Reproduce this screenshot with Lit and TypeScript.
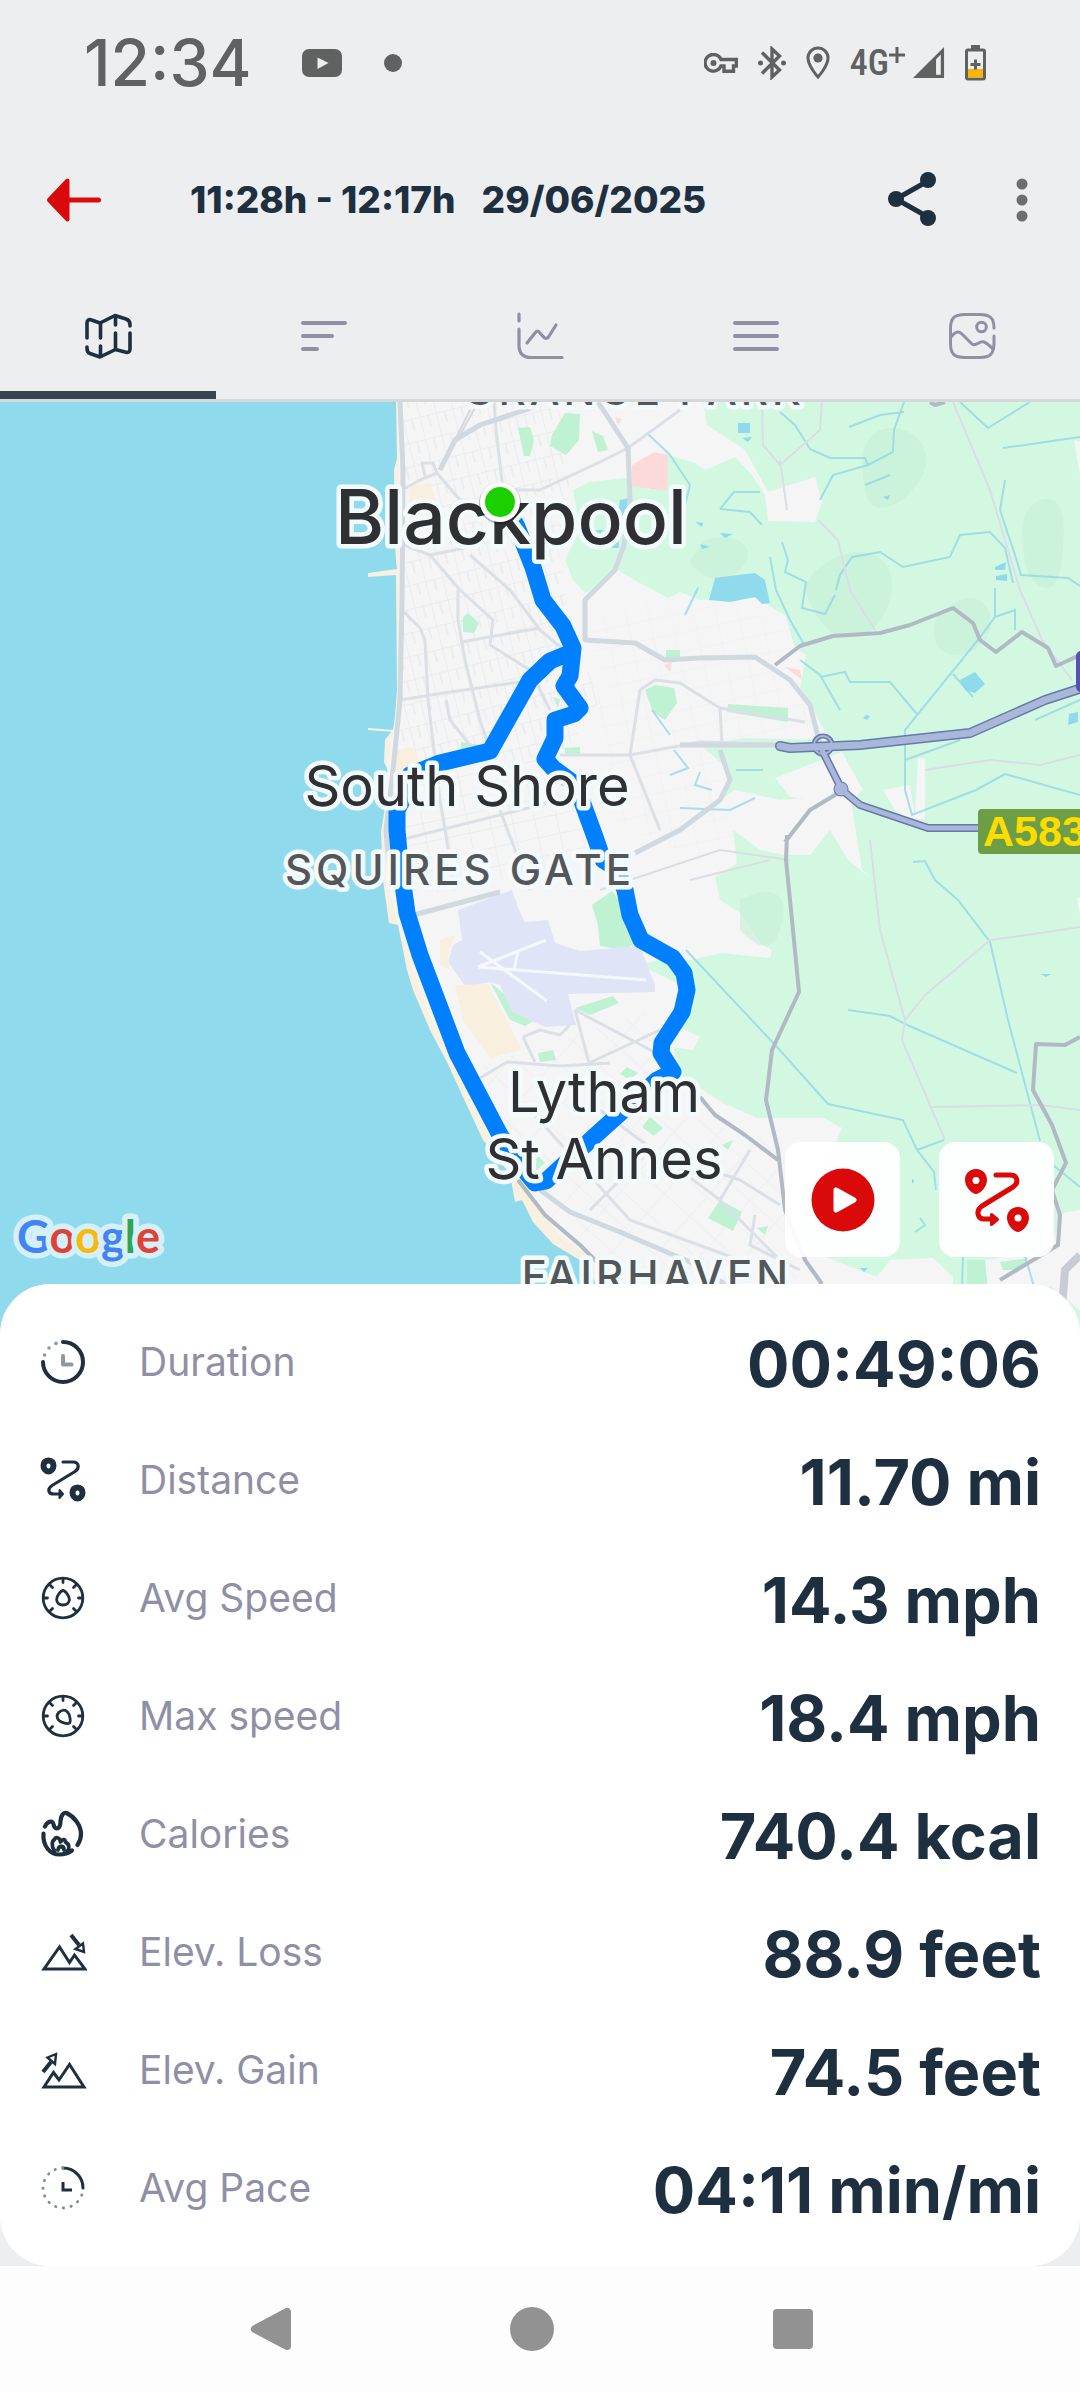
import { LitElement, html, css, svg, type TemplateResult, type SVGTemplateResult } from "lit";
import { customElement, property } from "lit/decorators.js";

const INK = "#1e2f40";
const MUTED = "#8f90a6";
const RED = "#db0a0a";

const icons: Record<string, SVGTemplateResult> = {
  duration: svg`
    <path d="M24 4A20 20 0 1 1 4 24" fill="none" stroke=${INK} stroke-width="4" stroke-linecap="round"/>
    <g fill="#8d98a3"><circle cx="5.600" cy="17" r="1.800"/><circle cx="10" cy="10" r="1.800"/><circle cx="17" cy="5.400" r="1.800"/></g>
    <path d="M24 18V26.500H32.500" fill="none" stroke="#8d98a3" stroke-width="4" stroke-linecap="round" stroke-linejoin="round"/>`,
  distance: svg`
    <g fill="none" stroke=${INK} stroke-linecap="round" stroke-linejoin="round">
      <path d="M9.500 4.500C13 4.500 14.500 7 14.500 9.500C14.500 13 12 15.500 9.500 15.500S4.500 13 4.500 9.500C4.500 7 6 4.500 9.500 4.500Z" stroke-width="6"/>
      <path d="M38.500 31.500C42 31.500 43.500 34 43.500 36.500C43.500 40 41 42.500 38.500 42.500S33.500 40 33.500 36.500C33.500 34 35 31.500 38.500 31.500Z" stroke-width="6"/>
      <path d="M24 6H34C40 6 41 12 36 15.500L13 29.500C8 33 9 38 15 38H21.500" stroke-width="3.200"/>
      <path d="M20.500 34L24 38L20.500 42Z" fill=${INK} stroke-width="2"/>
    </g>`,
  avgSpeed: svg`
    <g fill="none" stroke=${INK} stroke-width="2.800" stroke-linecap="round" stroke-linejoin="round">
      <circle cx="24" cy="24" r="19.800"/>
      <path d="M24 4.500V8.500M4.500 24H8.500M43.500 24H39.500M10.500 10.500L13.500 13.500M37.500 10.500L34.500 13.500M10.500 37.500L13.500 34.500M37.500 37.500L34.500 34.500"/>
      <path d="M24 16.500C22 16.500 17.600 22 17.600 25.500C17.600 29 20.500 31 24 31S30.400 29 30.400 25.500C30.400 22 26 16.500 24 16.500Z"/>
    </g>`,
  maxSpeed: svg`
    <g fill="none" stroke=${INK} stroke-width="2.800" stroke-linecap="round" stroke-linejoin="round">
      <circle cx="24" cy="24" r="19.800"/>
      <path d="M24 4.500V8.500M4.500 24H8.500M43.500 24H39.500M10.500 10.500L13.500 13.500M37.500 10.500L34.500 13.500M10.500 37.500L13.500 34.500M37.500 37.500L34.500 34.500"/>
      <path d="M30.500 31C32 29.500 31 22.500 28.500 20C26 17.500 22.500 17.800 20 20.300S17.800 26 20 28.500C22.500 31 29 32.300 30.500 31Z"/>
    </g>`,
  calories: svg`
    <g fill="none" stroke=${INK} stroke-width="4.200" stroke-linecap="round" stroke-linejoin="round">
      <path d="M6 16.500C7.500 13 10.500 11 12.800 11.700C15.500 13 14 18 17.500 18.500C21 18.500 21.500 14 21.500 11C22 6 24 2 27.500 3C35 6.500 42 15 42 24C42 28.500 40.500 32 38.500 35"/>
      <path d="M4.500 23.500C3.500 36 11 44.500 20.500 44.500C25.500 44.500 29.500 43 33 40.500"/>
      <path d="M15.500 41C12.500 37 12.500 31 15.500 29.500C16.500 27 20.500 26.500 21.500 32C23.500 28.500 26 29 26.500 32C30 34 31 38 28.500 41M19 40C19.500 37.500 21 36.500 22 36.500C23.500 36.500 25 37.500 25 40" stroke-width="3.800"/>
    </g>`,
  elevLoss: svg`
    <g fill="none" stroke=${INK} stroke-width="3" stroke-linejoin="miter">
      <path d="M5 41H46L35.500 27L30.500 34.500L20.500 19Z"/>
      <path d="M32 7L40 17" stroke-width="4"/>
      <path d="M36.500 21L44 15.500L45 24Z" stroke-width="2.400"/>
    </g>`,
  elevGain: svg`
    <g fill="none" stroke=${INK} stroke-width="3">
      <path d="M5 41H45L30.500 18.500L20 34L14.500 26.500Z"/>
      <path d="M4 26L12 16" stroke-width="4"/>
      <path d="M8.500 11.500L17 8L16 18Z" stroke-width="2.400"/>
    </g>`,
  avgPace: svg`
    <path d="M24 4A20 20 0 0 1 44 24" fill="none" stroke=${INK} stroke-width="3" stroke-linecap="round"/>
    <path d="M44 24A20 20 0 1 1 24 4" fill="none" stroke="#7f8b96" stroke-width="2.800" stroke-linecap="round" stroke-dasharray="0.400 7.450" stroke-dashoffset="-7"/>
    <path d="M24 18V26H33" fill="none" stroke=${INK} stroke-width="3"/>`,
};

interface Stat {
  icon: string;
  label: string;
  value: string;
}

const stats: Stat[] = [
  { icon: "duration", label: "Duration", value: "00:49:06" },
  { icon: "distance", label: "Distance", value: "11.70 mi" },
  { icon: "avgSpeed", label: "Avg Speed", value: "14.3 mph" },
  { icon: "maxSpeed", label: "Max speed", value: "18.4 mph" },
  { icon: "calories", label: "Calories", value: "740.4 kcal" },
  { icon: "elevLoss", label: "Elev. Loss", value: "88.9 feet" },
  { icon: "elevGain", label: "Elev. Gain", value: "74.5 feet" },
  { icon: "avgPace", label: "Avg Pace", value: "04:11 min/mi" },
];

/* ---------- Android status bar ---------- */
@customElement("status-bar")
export class StatusBar extends LitElement {
  static styles = css`
    :host {
      display: flex;
      align-items: center;
      height: 126px;
      padding: 0 94px 0 84px;
      color: #606161;
      font-family: Inter, sans-serif;
    }
    .time { font-size: 64px; line-height: 72px; font-weight: 500; }
    .notes { display: flex; align-items: center; gap: 42px; margin-left: 50px; }
    .system { display: flex; align-items: center; margin-left: auto; gap: 20px; }
    .network { display: flex; align-items: center; gap: 8px; }
    .carrier {
      display: flex;
      align-items: flex-start;
      font-family: "Roboto Condensed", "Liberation Sans Narrow", Roboto, sans-serif;
      font-size: 36px;
      line-height: 40px;
      font-weight: 500;
    }
    svg { display: block; }
  `;

  render() {
    return html`
      <span class="time">12:34</span>
      <div class="notes">
        <svg width="40" height="28" viewBox="0 0 40 28" aria-label="Video notification" role="img">
          <rect width="40" height="28" rx="7" fill="#606161"/><path d="M15.500 8.500L26.500 14L15.500 20Z" fill="#eceef0"/>
        </svg>
        <svg width="18" height="18" viewBox="0 0 18 18" aria-hidden="true"><circle cx="9" cy="9" r="9" fill="#606161"/></svg>
      </div>
      <div class="system">
        <svg width="34" height="20" viewBox="0 0 34 20" aria-label="VPN" role="img">
          <path d="M9.500 1.500A8.300 8.300 0 1 0 17 13H20V18.300H29.500V13H32.300V6.500H17A8.300 8.300 0 0 0 9.500 1.500Z" fill="none" stroke="#606161" stroke-width="3.400"/>
          <circle cx="9.500" cy="10" r="3" fill="#606161"/>
        </svg>
        <svg width="28" height="34" viewBox="0 0 28 34" aria-label="Bluetooth" role="img">
          <path d="M4 6.500L21.500 24L14 31V3L21.500 10L4 27.500" fill="none" stroke="#606161" stroke-width="3.400"/>
          <circle cx="2.500" cy="17" r="2.500" fill="#606161"/><circle cx="25.500" cy="17" r="2.500" fill="#606161"/>
        </svg>
        <svg width="24" height="34" viewBox="0 0 24 34" aria-label="Location" role="img">
          <path d="M12 2A10 10 0 0 0 2 12C2 20 12 31 12 31S22 20 22 12A10 10 0 0 0 12 2Z" fill="none" stroke="#606161" stroke-width="3"/>
          <circle cx="12" cy="12" r="4.600" fill="#606161"/>
        </svg>
        <div class="network">
          <span class="carrier">4G<svg width="16" height="22" viewBox="0 0 16 22" aria-label="plus" role="img"><path d="M8 4V20M0 12H16" stroke="#606161" stroke-width="3" /></svg></span>
          <svg width="32" height="32" viewBox="0 0 34 34" aria-label="Signal" role="img">
            <path d="M0 33L33 0V33Z" fill="#606161"/><path d="M24.500 13L29.500 8V29.500H24.500Z" fill="#eceef0"/>
          </svg>
        </div>
        <svg width="21" height="36" viewBox="0 0 21 36" aria-label="Battery saver" role="img">
          <rect x="6" width="9" height="5" fill="#606161"/>
          <rect x="1.500" y="5" width="18" height="29" rx="1.500" fill="#eceef0" stroke="#606161" stroke-width="3"/>
          <rect x="3" y="24" width="15" height="8.500" fill="#fbb400"/>
          <path d="M10.500 14.500V24.500M5.500 19.500H15.500" stroke="#606161" stroke-width="3"/>
        </svg>
      </div>
    `;
  }
}

/* ---------- Title bar with back, share and overflow ---------- */
@customElement("title-bar")
export class TitleBar extends LitElement {
  static styles = css`
    :host {
      display: flex;
      align-items: center;
      height: 148px;
      padding: 0 46px 0 38px;
      font-family: Inter, sans-serif;
      color: #1e2f40;
    }
    button { display: grid; place-items: center; border: 0; padding: 0; background: none; cursor: pointer; }
    .back { width: 72px; height: 72px; }
    .title { flex: 1; display: flex; gap: 26px; margin: 0 0 0 80px; font-size: 37px; line-height: 48px; font-weight: 800; white-space: nowrap; }
    .share { width: 72px; height: 72px; margin-right: 62px; }
    .more { width: 24px; height: 72px; }
    .actions { display: flex; align-items: center; }
    svg { display: block; }
  `;

  render() {
    return html`
      <button class="back" aria-label="Back">
        <svg width="56" height="46" viewBox="0 0 56 46">
          <path d="M3 23L21.500 3.500V42.500Z" fill=${RED} stroke=${RED} stroke-width="4" stroke-linejoin="round"/>
          <path d="M20 23H52.500" stroke=${RED} stroke-width="5" stroke-linecap="round"/>
        </svg>
      </button>
      <h1 class="title"><span>11:28h - 12:17h</span><span>29/06/2025</span></h1>
      <div class="actions">
        <button class="share" aria-label="Share">
          <svg width="48" height="56" viewBox="0 0 48 56">
            <path d="M40 9L8 27L40 45" fill="none" stroke=${INK} stroke-width="5"/>
            <g fill=${INK}><circle cx="40" cy="8" r="8"/><circle cx="8" cy="27" r="8"/><circle cx="40" cy="46" r="8"/></g>
          </svg>
        </button>
        <button class="more" aria-label="More options">
          <svg width="12" height="44" viewBox="0 0 12 44"><g fill="#6c6d6d"><circle cx="6" cy="6" r="5.500"/><circle cx="6" cy="22" r="5.500"/><circle cx="6" cy="38" r="5.500"/></g></svg>
        </button>
      </div>
    `;
  }
}

/* ---------- Section tabs ---------- */
@customElement("section-tabs")
export class SectionTabs extends LitElement {
  @property({ type: Number }) active = 0;

  static styles = css`
    :host { display: block; border-bottom: 3px solid #d5d7d8; }
    .tabs { display: grid; grid-template-columns: repeat(5, 1fr); height: 125px; }
    .tab { display: grid; place-items: center; border: 0; border-top: 6px solid transparent; border-bottom: 8px solid transparent; padding: 0; background: none; cursor: pointer; }
    .tab.current { border-bottom-color: #364550; }
    svg { display: block; }
  `;

  private tabs: { name: string; art: SVGTemplateResult }[] = [
    {
      name: "Map",
      art: svg`<g fill="none" stroke=${INK} stroke-width="3.600" stroke-linecap="round" stroke-linejoin="round">
        <path d="M3 26V11C3 8 5 7 7.500 8L16 11L31 3.500L42 7C45 8 46 10 46 12.500V14"/>
        <path d="M46 21V37C46 40 44 41 41 40L31.500 37.500L16 45L6 41.500C3.500 40.500 3 39 3 36.500V35"/>
        <path d="M16.500 12V26M16.500 34V44M31.500 4V13M31.500 21V37"/></g>`,
    },
    {
      name: "Laps",
      art: svg`<path d="M3 11H45M3 24H32M3 37H17" fill="none" stroke=${MUTED} stroke-width="4" stroke-linecap="round"/>`,
    },
    {
      name: "Charts",
      art: svg`<g fill="none" stroke=${MUTED} stroke-width="3.200" stroke-linecap="round" stroke-linejoin="round">
        <path d="M3 2V9M3 17V33C3 41 7 45.500 15 45.500H46"/>
        <path d="M11 31L19 21C21 18.500 22.500 18.500 24 21L27.500 25C29.500 27 30.500 27 32.500 25L40 13"/></g>`,
    },
    {
      name: "Details",
      art: svg`<path d="M3 11H45M3 24H45M3 37H45" fill="none" stroke=${MUTED} stroke-width="4" stroke-linecap="round"/>`,
    },
    {
      name: "Photos",
      art: svg`<g fill="none" stroke=${MUTED} stroke-width="3" stroke-linecap="round" stroke-linejoin="round">
        <path d="M46 16C46 6 42 2.500 32 2.500H17C6 2.500 2.500 6 2.500 17V31C2.500 42 6 45.500 17 45.500H32C42 45.500 46 42 46 31V24"/>
        <path d="M3 25C7 19.500 11 18.500 14 22L24 32C29 35 31 28 36 30C39 31 42 34 45 37"/>
        <circle cx="33.500" cy="15" r="4.800"/></g>`,
    },
  ];

  render() {
    return html`
      <div class="tabs" role="tablist">
        ${this.tabs.map(
          (t, i) => html`<button role="tab" class=${i === this.active ? "tab current" : "tab"} aria-selected=${i === this.active} aria-label=${t.name}>
            <svg width="48" height="48" viewBox="0 0 48 48">${t.art}</svg>
          </button>`,
        )}
      </div>
    `;
  }
}

/* ---------- Map with the recorded route ---------- */
@customElement("route-map")
export class RouteMap extends LitElement {
  static styles = css`
    :host { display: block; position: relative; overflow: hidden; background: #90daee; font-family: Inter, sans-serif; }
    .canvas { position: absolute; inset: 0; width: 100%; height: 100%; display: block; }
    .place { fill: #2e3033; stroke: #f3fafc; stroke-width: 9px; stroke-linejoin: round; paint-order: stroke; text-anchor: middle; }
    .city { font-size: 75px; font-weight: 500; }
    .town { font-size: 56px; font-weight: 400; }
    .suburb { font-size: 42px; font-weight: 500; letter-spacing: 4px; fill: #54575a; }
    .road { font-family: "Liberation Sans", Arial, sans-serif; font-size: 43px; font-weight: 700; fill: #ffdc00; }
    .brand { font-family: Lato, sans-serif; font-size: 45px; font-weight: 700; stroke: #d5f0f8; stroke-width: 11px; stroke-linejoin: round; paint-order: stroke; }
    .controls { position: absolute; right: 26px; bottom: 77px; display: flex; gap: 39px; }
    .control { width: 115px; height: 115px; display: grid; place-items: center; border: 0; border-radius: 16px; padding: 0; background: rgba(255, 255, 255, 0.93); cursor: pointer; }
    .control svg { display: block; }
  `;

  private land() {
    return svg`
      <path fill="#f8f0e0" d="M396 402L397 458L394 470L395 540L396 562L397 569L368 573V577L396 575L397 690L394 728L385 740L384 762L390 775L381 832L383 880L389 923L398 925L407 970L413 990L430 1030L447 1062L463 1097L483 1140L510 1174L515 1202L522 1200L533 1222L553 1244L583 1262L600 1290L650 1340H1080V402Z"/>
      <path fill="#f5f5f6" d="M399 402V600L398 700L388 760L384 830L387 880L396 918L412 965L425 1005L445 1048L470 1100L492 1142L514 1172L535 1205L560 1235L590 1258L612 1290L660 1340H1080V402Z"/>
      <path fill="none" stroke="#f8f0e0" stroke-width="2" d="M368 729L394 731"/>
      <path fill="url(#grid-a)" d="M402 402H560L570 480L560 560L575 640L600 700L560 760H400Z"/>
      <path fill="url(#grid-b)" d="M398 760H560L590 860L400 900L388 840Z"/>
      <path fill="url(#grid-c)" d="M455 1075L650 1010L720 1110L790 1160L800 1334H620L520 1180Z" opacity=".6"/>
      <path fill="url(#grid-b)" d="M590 620L680 592L780 620L810 720L800 800L700 860L610 820Z" opacity=".4"/>`;
  }

  private vegetation() {
    return svg`
      <path fill="#d3f8e2" d="M703 402H1080V1334H1010L953 1334L953 1277L933 1258L890 1260L877 1277L823 1256L790 1240L837 1140L842 1128L823 1118L757 1118L723 1103L683 1077L673 1047L693 1050L700 1037L680 1027L690 990L640 965L670 957L690 960L722 953L770 958L772 950L760 943L740 913L720 900L715 877L737 863L733 830L720 800L730 770L700 745L745 738L830 740L812 708L800 690L806 655L795 648L785 615L755 598L700 600L680 592L668 598L640 583L617 570L600 585L585 593L573 580L565 560L580 530L573 490L590 482L625 478L650 490L668 455L695 463L705 470L735 457L752 475L765 495L768 521L815 522L822 502L815 477L768 492L745 450L707 425Z"/>
      <g fill="#c6efd7" opacity=".6">
        <path d="M830 560C870 540 900 560 890 600S840 650 820 620S800 580 830 560ZM960 600C985 590 1000 620 985 640S940 660 935 640S940 610 960 600ZM880 430C910 420 940 450 920 480S870 520 865 490S860 440 880 430ZM1040 500C1070 490 1065 540 1060 570S1030 590 1025 560S1020 510 1040 500ZM740 900C780 880 790 900 780 930S750 940 740 930ZM705 540C740 530 760 550 740 570S690 570 690 560Z"/>
      </g>
      <g fill="#f5f5f6">
        <path d="M775 778L842 752L863 790L850 802L790 797ZM733 830L720 800L735 790L780 800L850 795L862 870L873 880L848 860L830 830L810 855L785 855L760 850Z"/>
        <path d="M918 758H925V820L915 818ZM883 790L910 785L916 825L895 810ZM1074 440L1080 442V475ZM1077 898L1080 897V915Z"/>
        <path d="M1063 1213L1080 1210V1310L1050 1286L1010 1334H985V1260L1050 1250Z"/>
      </g>
      <g fill="#bff1d3">
        <path d="M518 428L530 427L534 440L530 456H524ZM565 413L580 414L579 440L566 455L550 446L552 435ZM592 431L603 436L608 450L598 452Z"/>
        <path d="M463 617L468 613L479 623L474 633L463 632ZM645 690L655 685L674 688L677 703L665 720L653 712ZM461 742L480 745L477 752H460ZM553 697L560 699L558 708ZM565 748L580 747V755H565ZM666 650L680 650V660H666ZM728 704L788 708V722L727 712Z"/>
        <path d="M592 905L612 891L622 905L625 928L634 945L620 950L600 946L598 925ZM575 1008L613 996L619 1003L590 1015ZM538 1053L553 1050L556 1060L540 1062ZM620 1074L627 1067L638 1073L630 1080ZM642 1127L650 1117L663 1128L654 1136ZM490 982L505 995L520 1015L535 1020L525 1026L510 1020Z"/>
        <path d="M720 1200L742 1212L733 1231L708 1218ZM1000 1262L1028 1258L1020 1270H1003ZM967 1260H985L988 1290H967ZM722 1145L733 1140L728 1150ZM757 1228L768 1226L765 1235ZM537 1155L545 1163L535 1172Z"/>
      </g>
      <path fill="#dfe5f6" d="M458 910L512 890L519 910L525 922L548 920L555 943L580 951L640 946L655 985L655 992L568 994L576 1025L545 1027L512 1012L500 985L490 982L466 987L448 962L453 945L462 940Z"/>
      <g stroke="#f6f8ff" stroke-width="3" fill="none"><path d="M478 967L646 980M478 967L546 940M480 952L547 1001M518 951L514 970"/></g>
      <path fill="#f8efdf" d="M455 985L488 984L522 1050L490 1058L463 1020ZM440 940L455 935L448 955L450 970L440 965ZM410 485L430 483L436 500L420 530L408 520ZM396 750L412 747L422 765L395 775Z"/>
      <g fill="#fcdada"><path d="M632 465L654 452L668 455L667 491L631 486ZM615 417L622 419L618 425ZM785 667L800 670L802 680ZM664 665L672 662L670 672Z"/></g>`;
  }

  private water() {
    return svg`
      <g fill="#90daee">
        <path d="M715 578L730 576L755 573L765 580L770 603L762 604L755 597L730 602L709 600ZM960 680L975 672L985 684L975 693L965 690ZM738 423H750V433H738ZM742 438L752 437L748 442ZM620 500L630 498L626 515L618 528L619 548H612ZM995 567L1006 562L1005 570H995ZM996 576L1007 574V581L996 580ZM1069 714L1078 712V722L1068 725ZM695 522L703 523L702 527ZM720 533L733 534L725 538ZM700 544L710 547L702 549ZM737 547L744 549ZM883 497L890 495L888 500ZM866 715L870 716L867 720L863 718ZM595 530L604 530L600 534ZM1041 974H1051L1046 977ZM860 1268L868 1268L864 1272ZM912 1179A2 2 0 1 1 912 1183Z"/>
      </g>
      <g fill="none" stroke="#8fd5e6" stroke-width="2" opacity=".75">
        <path d="M780 412L795 425L810 449L830 458L865 458L868 465L893 452L894 430L904 402M868 465L833 475L820 500M849 427L880 415L904 412M865 485L890 475M960 402L988 428L1030 402M1003 448L1080 437M1005 480L1000 510L1015 555L1021 575L1068 578L1080 586M782 542L788 560L785 572L806 582L802 608L825 614L835 595M836 590L840 575L852 557L880 552L903 567L950 557L960 535L990 532L1005 548L1013 583M770 557L776 590L790 620L805 646"/>
        <path d="M720 509L734 492H760M720 509L750 512L762 525M995 588V617L978 640L905 730L905 790L912 815L976 790L1005 774L1080 795M995 617L1015 610V630M820 677L845 672L850 682H890L917 714M953 674L973 697M905 760L960 740M800 660L820 675L840 710M1035 720L1080 700M648 434L670 455L690 485L685 505M685 615L698 588M652 710L670 735M680 808L730 810L755 798M674 750L688 768L670 775M736 770H763M700 772L695 785L712 790"/>
        <path d="M913 862L925 861L935 880L958 900L990 942L1008 1020L1040 1141M848 1010L890 1016L905 1024L1017 1073M686 950L778 1048L828 1104L903 1120L917 1150L934 1172L936 1190M917 1150L944 1140M963 1256L962 1290M1025 1256L1035 1290M1053 1165L1080 1187M920 1218L925 1225L915 1232"/>
      </g>`;
  }

  private roads() {
    return svg`
      <g fill="none" stroke="#dcdde4" stroke-width="2">
        <path d="M953 402L990 490L1020 590L1042 640L1072 680M780 460L787 510M762 402L763 445L780 465L820 430L822 402M818 520L838 540L850 590L875 630M925 770L990 760L1040 765L1080 755M870 840L880 930L905 1020L902 1040L945 1140M905 1020L925 995L955 970L990 940L1020 936L1080 927M932 1107L1040 1105L1080 1110M600 890L720 850L790 860M690 880L770 860"/>
      </g>
      <g fill="none" stroke="#dbe0e6" stroke-width="3" stroke-linejoin="round">
        <path d="M494 402L496 430L503 490M503 490H540L600 462L628 448L680 410M402 490L420 480L437 473L433 463H422L425 476M437 473L460 500L470 500M402 610L420 628L425 640L428 700L440 800L455 890M404 545L430 555L460 590L493 620L490 645L530 670L550 710M430 555L480 545M470 555L510 590L540 630L570 655M461 642L540 628M446 700L450 720L470 745L490 755"/>
        <path d="M400 700L450 692L520 682M458 590V620L465 660L480 720L490 750M560 755L630 755L700 742L805 745M630 755L640 690L655 680L680 683L720 708L805 722M720 708L722 745M630 755L660 830M500 810L530 890M400 840L560 800"/>
        <path d="M480 1078L507 1062L560 1066L610 1063M575 1010L589 1063M575 1010L660 1055M589 1063L660 1030M523 1037L540 1030L560 1035L570 1025M523 1037L535 1062M600 1110L720 1200L780 1260M590 1210L650 1150M530 1110L630 1220L740 1260M720 1200L750 1150M755 1215L750 1245L800 1270M710 1170L740 1180L780 1205"/>
      </g>
      <g fill="none" stroke="#d0d8e0" stroke-width="5" stroke-linejoin="round">
        <path d="M400 402L403 470L402 600L400 700L392 780L386 830L390 880M440 470L455 440L480 425L540 405M598 402L628 448L630 500L624 545L615 570L585 600V640L635 643L665 660L700 658L755 657L790 680L810 705L820 745M410 916L500 892M635 853L680 830L720 800L730 780L720 750M680 745L785 745"/>
        <path d="M540 1190L570 1212L620 1232L690 1262L750 1300"/>
      </g>
      <path fill="none" stroke="#d5d8dd" stroke-width="2" d="M440 470L470 410M446 460L476 406"/>
      <path fill="none" stroke="#b1b9c4" stroke-width="4" stroke-linejoin="round" d="M775 665L800 646L833 636L880 633L910 625L953 608L973 623L980 640L996 652L1022 632L1048 648L1056 666L1080 655M930 402L935 405L945 402M785 842L810 810L840 792M787 835L786 860L792 920L799 992L772 1050L766 1100L778 1150L785 1210L805 1260L822 1284M700 1097L715 1115L745 1135L778 1160M518 1180L545 1215L580 1245L605 1270M1080 1037L1065 1045L1036 1044L1033 1090L1052 1125L1066 1163L1052 1190L1060 1215L1058 1245L1000 1280"/>
      <path fill="none" stroke="#c7ccd7" stroke-width="8" d="M1080 1255L1065 1270L1060 1334"/>
      <g fill="none" stroke-linejoin="round" stroke-linecap="round">
        <path stroke="#6679a8" stroke-width="10" d="M780 746L790 748L860 745L970 733L1045 700L1085 687"/>
        <path stroke="#6679a8" stroke-width="8" d="M822 750L842 790L860 805L928 828H980"/>
        <circle cx="823" cy="745" r="9" stroke="#6679a8" stroke-width="5"/><circle cx="841" cy="789" r="5" stroke="#6679a8" stroke-width="5"/>
        <path stroke="#a9b8da" stroke-width="7" d="M780 746L790 748L860 745L970 733L1045 700L1085 687"/>
        <path stroke="#a9b8da" stroke-width="5" d="M822 750L842 790L860 805L928 828H980"/>
        <circle cx="823" cy="745" r="9" stroke="#a9b8da" stroke-width="2"/><circle cx="841" cy="789" r="5" stroke="#a9b8da" stroke-width="3" fill="#a9b8da"/>
      </g>`;
  }

  render() {
    return html`
      <svg class="canvas" viewBox="0 402 1080 932" preserveAspectRatio="xMidYMid slice" role="img" aria-label="Route from Blackpool to Lytham St Annes and back">
        <defs>
          <pattern id="grid-a" width="17" height="23" patternUnits="userSpaceOnUse" patternTransform="rotate(-14)"><path d="M0 0H17M0 0V23M9 0V12" stroke="#e9eaed" stroke-width="1.500" fill="none"/></pattern>
          <pattern id="grid-b" width="22" height="19" patternUnits="userSpaceOnUse" patternTransform="rotate(-12)"><path d="M0 0H22M0 0V19" stroke="#e8eaed" stroke-width="1.500" fill="none"/></pattern>
          <pattern id="grid-c" width="34" height="26" patternUnits="userSpaceOnUse" patternTransform="rotate(42)"><path d="M0 0H34M0 0V26" stroke="#e6e9ed" stroke-width="1.500" fill="none"/></pattern>
        </defs>
        ${this.land()}${this.vegetation()}${this.water()}${this.roads()}
        <path fill="none" stroke="#0080ff" stroke-width="17" stroke-linejoin="round" stroke-linecap="round"
          d="M503 500L517 527L533 567L543 600L563 626L573 648L570 676L564 686L580 708L574 714L555 720V738L545 759L553 768L576 785L595 837L603 860L616 868L625 890L630 915L641 940L673 958L684 973L687 990L682 1012L662 1043L661 1053L673 1072L657 1080L597 1134L546 1181L535 1183L520 1165L500 1135L457 1053L420 955L407 913L400 863L397 830V810L405 795L410 775L440 763L490 751L530 680L550 661L572 652"/>
        <g>
          <text class="place suburb" x="634" y="405">GRANGE PARK</text>
          <text class="place city" x="511" y="544">Blackpool</text>
          <text class="place town" x="467" y="806">South Shore</text>
          <text class="place suburb" x="460" y="885">SQUIRES GATE</text>
          <text class="place town" x="604" y="1112">Lytham</text>
          <text class="place town" x="604" y="1179">St Annes</text>
          <text class="place suburb" x="657" y="1291">FAIRHAVEN</text>
        </g>
        <rect x="978" y="809" width="120" height="45" rx="4" fill="#6b9e45"/>
        <text class="road" x="983" y="846">A583</text>
        <rect x="1076" y="651" width="30" height="41" rx="5" fill="#5a4fb8"/>
        <circle cx="500" cy="503" r="21" fill="#000" opacity=".25"/>
        <circle cx="500" cy="502" r="20" fill="#fff"/>
        <circle cx="500" cy="502" r="15" fill="#1cd000"/>
        <text class="brand" x="17" y="1253"><tspan fill="#4284f3">G</tspan><tspan fill="#e04238">o</tspan><tspan fill="#f6b90c">o</tspan><tspan fill="#4284f3">g</tspan><tspan fill="#33a451">l</tspan><tspan fill="#e04238">e</tspan></text>
      </svg>
      <div class="controls">
        <button class="control" aria-label="Play route">
          <svg width="64" height="64" viewBox="0 0 64 64"><circle cx="32" cy="32" r="31.500" fill=${RED}/><path d="M25 22L43 32L25 42Z" fill="#fff" stroke="#fff" stroke-width="5" stroke-linejoin="round"/></svg>
        </button>
        <button class="control" aria-label="Show route">
          <svg width="64" height="64" viewBox="0 0 64 64">
            <path fill=${RED} fill-rule="evenodd" d="M11 1C18 1 22 6 22 12C22 19 15 26 11 26S0 19 0 12C0 6 4 1 11 1ZM11 9A3.500 3.500 0 1 0 11 16A3.500 3.500 0 1 0 11 9ZM53 39C60 39 64 44 64 50C64 57 57 64 53 64S42 57 42 50C42 44 46 39 53 39ZM53 46.500A3.500 3.500 0 1 0 53 53.500A3.500 3.500 0 1 0 53 46.500Z"/>
            <path fill="none" stroke=${RED} stroke-width="5" stroke-linecap="round" stroke-linejoin="round" d="M31 7H45C53 7 54 15 48 19L17 38C10 43 13 51 19 51H28"/>
            <path d="M26.500 46.500L32.500 51.500L26.500 56.500Z" fill=${RED} stroke=${RED} stroke-width="3" stroke-linejoin="round"/>
          </svg>
        </button>
      </div>
    `;
  }
}

/* ---------- Workout figures ---------- */
@customElement("stats-panel")
export class StatsPanel extends LitElement {
  @property({ attribute: false }) rows: Stat[] = [];

  static styles = css`
    :host { display: block; font-family: Inter, sans-serif; background: #fff; border-radius: 50px; }
    .list { margin: 0; padding: 19px 39px; }
    .row { display: grid; grid-template-columns: 48px 1fr auto; align-items: center; height: 118px; }
    .row svg { display: block; }
    .label { margin-left: 52px; font-size: 39px; line-height: 48px; color: #8f90a6; }
    .value { margin: 0; padding-top: 4px; font-size: 63px; line-height: 80px; font-weight: 700; color: #1e2f40; white-space: nowrap; }
  `;

  render(): TemplateResult {
    return html`
      <dl class="list">
        ${this.rows.map(
          (r) => html`<div class="row">
            <svg width="48" height="48" viewBox="0 0 48 48" aria-hidden="true">${icons[r.icon]}</svg>
            <dt class="label">${r.label}</dt>
            <dd class="value">${r.value}</dd>
          </div>`,
        )}
      </dl>
    `;
  }
}

/* ---------- Android navigation bar ---------- */
@customElement("nav-bar")
export class NavBar extends LitElement {
  static styles = css`
    :host { display: flex; justify-content: center; align-items: center; gap: 197px; height: 126px; padding-right: 16px; background: #fdfdfd; }
    button { display: grid; place-items: center; width: 64px; height: 64px; border: 0; padding: 0; background: none; cursor: pointer; }
    svg { display: block; }
  `;

  render() {
    return html`
      <button aria-label="Back"><svg width="44" height="44" viewBox="0 0 44 44"><path d="M6 22L38 5V39Z" fill="#929292" stroke="#929292" stroke-width="8" stroke-linejoin="round"/></svg></button>
      <button aria-label="Home"><svg width="44" height="44" viewBox="0 0 44 44"><circle cx="22" cy="22" r="22" fill="#929292"/></svg></button>
      <button aria-label="Recent apps"><svg width="40" height="40" viewBox="0 0 40 40"><rect width="40" height="40" rx="4" fill="#929292"/></svg></button>
    `;
  }
}

@customElement("app-root")
export class AppRoot extends LitElement {
  static styles = css`
    :host { display: flex; flex-direction: column; min-height: 100vh; background: #eceef0; }
    .map { flex: 1; min-height: 600px; }
    .panel { position: relative; margin-top: -50px; }
  `;

  render() {
    return html`
      <status-bar></status-bar>
      <title-bar></title-bar>
      <section-tabs .active=${0}></section-tabs>
      <route-map class="map"></route-map>
      <stats-panel class="panel" .rows=${stats}></stats-panel>
      <nav-bar></nav-bar>
    `;
  }
}
